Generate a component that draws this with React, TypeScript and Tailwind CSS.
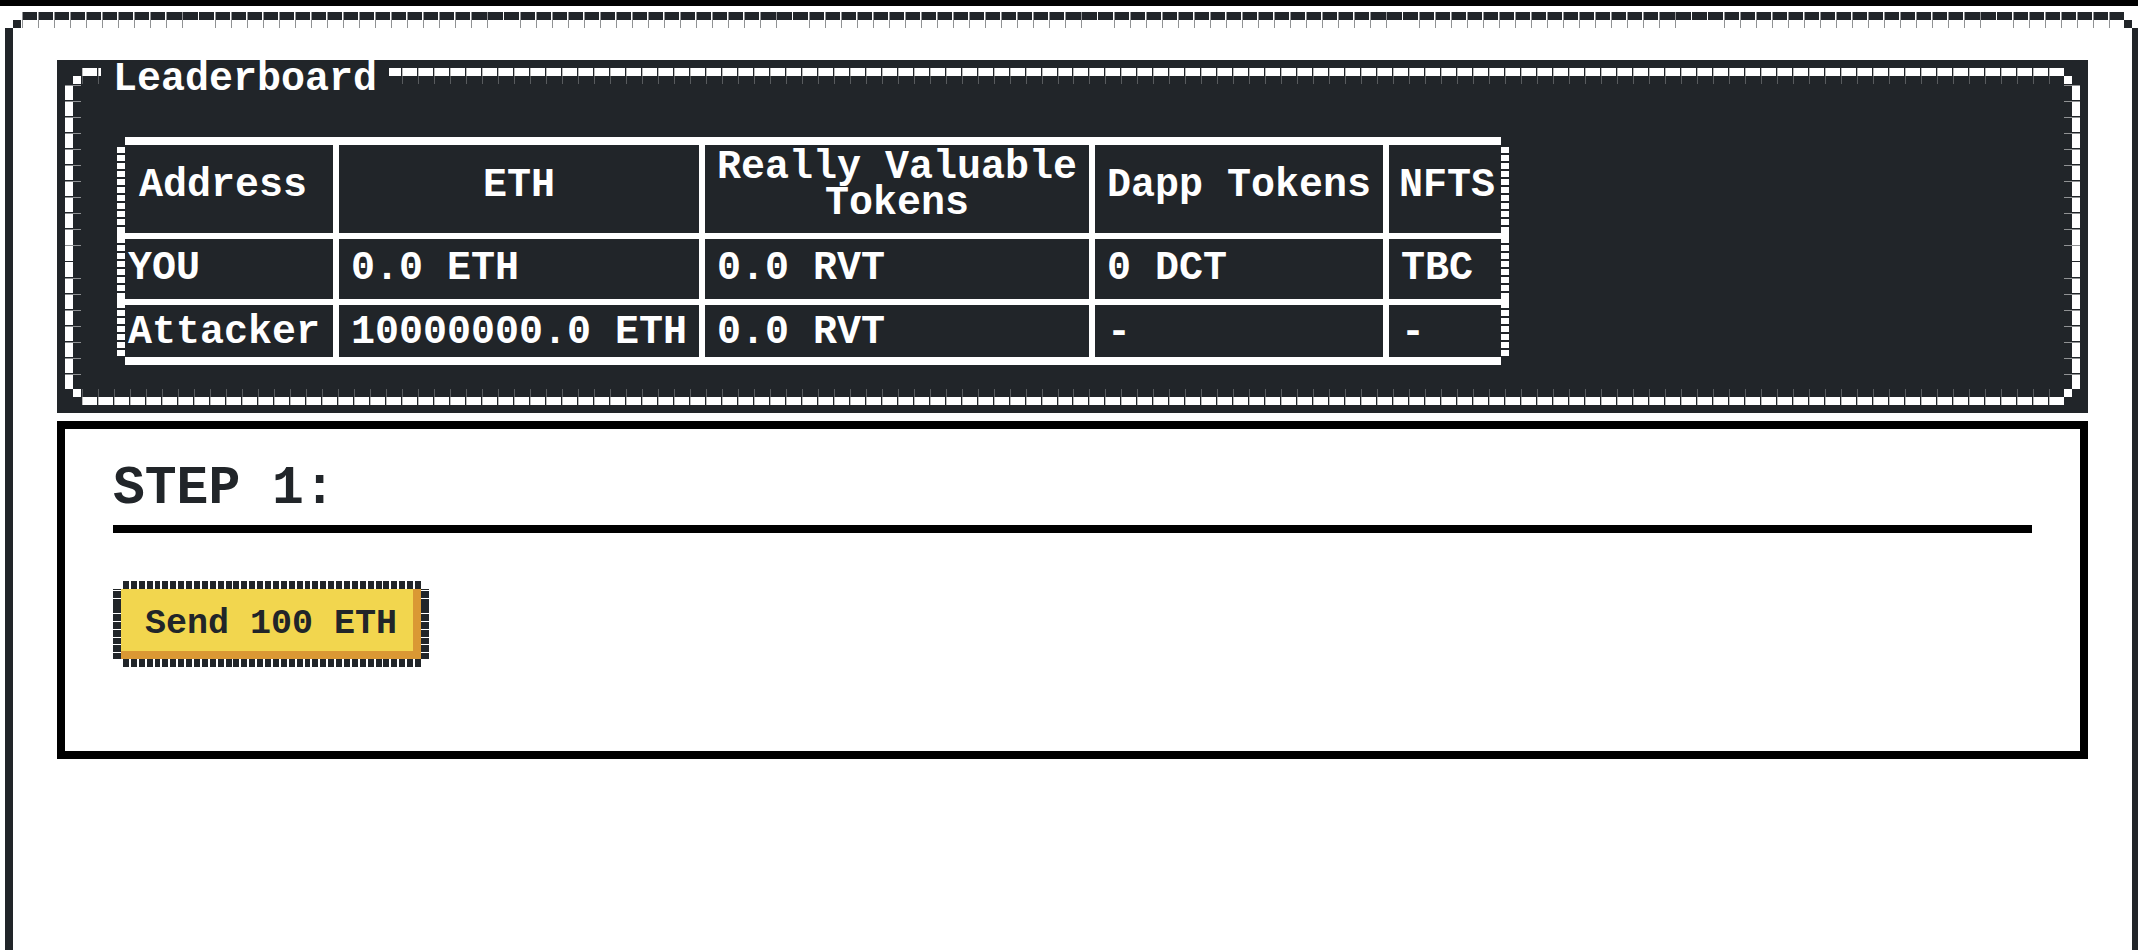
const balances = [
  { address: "YOU", eth: "0.0 ETH", rvt: "0.0 RVT", dapp: "0 DCT", nfts: "TBC" },
  { address: "Attacker", eth: "10000000.0 ETH", rvt: "0.0 RVT", dapp: "-", nfts: "-" },
];

const headCell = "border-r-[6px] border-b-[6px] border-white pt-0.5 pb-2 last:border-r-0";
const cell = "border-r-[6px] border-b-[6px] border-white pl-3 whitespace-nowrap last:border-r-0";
const dashes = "bg-[repeating-linear-gradient(to_bottom,#fff_0_6px,transparent_6px_8px)]";

/** Stitched side of the table; solid where the row lines meet it. */
function TableEdge() {
  return (
    <div aria-hidden="true" className="flex w-2 flex-col pt-[10px] pb-2">
      <div className={`h-[81px] ${dashes}`} />
      <div className="h-[15px] bg-white" />
      <div className={`mt-0.5 h-[49px] ${dashes}`} />
      <div className="h-[14px] bg-white" />
      <div className={`mt-0.5 flex-1 ${dashes}`} />
    </div>
  );
}

function Leaderboard() {
  return (
    <section
      aria-labelledby="leaderboard-title"
      className="border-8 border-solid border-transparent bg-[#212529] bg-clip-border px-9 pb-10 text-white [border-image-repeat:round] [border-image-slice:24] [border-image-source:url('data:image/svg+xml,%3Csvg%20xmlns=%22http://www.w3.org/2000/svg%22%20width=%2264%22%20height=%2264%22%20shape-rendering=%22crispEdges%22%3E%3Cpath%20d=%22M16%2016h8v8h-8zM40%2016h8v8h-8zM16%2040h8v8h-8zM40%2040h8v8h-8zM26%208h14v8h-14zM26%2048h14v8h-14zM8%2026h8v14h-8zM48%2026h8v14h-8z%22%20fill=%22white%22/%3E%3Cpath%20d=%22M25%208h1v8h-1zM25%2048h1v8h-1z%22%20fill=%22%23bbbbbb%22/%3E%3Cpath%20d=%22M8%2025h16v1h-16zM40%2025h16v1h-16z%22%20fill=%22%23909294%22/%3E%3Cpath%20d=%22M25%2016h1v8h-1zM25%2040h1v8h-1z%22%20fill=%22%23585b5e%22/%3E%3C/svg%3E')] [border-image-width:24px]"
    >
      <h2 id="leaderboard-title" className="w-fit bg-[#212529] px-3 pb-1 text-[40px] leading-6 font-bold">
        Leaderboard
      </h2>
      <div className="mt-[41px] ml-4 flex w-fit">
        <TableEdge />
        <table className="table-fixed border-separate border-spacing-0 border-y-8 border-white text-left text-[40px] leading-9 font-bold">
          <colgroup>
            <col className="w-[214px]" />
            <col className="w-[366px]" />
            <col className="w-[390px]" />
            <col className="w-[294px]" />
            <col className="w-[112px]" />
          </colgroup>
          <thead>
            <tr className="h-[94px] text-center">
              <th className={`${headCell} pr-3`}>Address</th>
              <th className={headCell}>ETH</th>
              <th className={headCell}>Really Valuable Tokens</th>
              <th className={headCell}>Dapp Tokens</th>
              <th className={`${headCell} pl-1`}>NFTS</th>
            </tr>
          </thead>
          <tbody className="[&>tr:last-child>td]:border-b-0 [&>tr:last-child>td]:pt-1">
            {balances.map((row) => (
              <tr key={row.address} className="h-[66px] last:h-[52px]">
                <td className="border-r-[6px] border-b-[6px] border-white pl-[3px] whitespace-nowrap">{row.address}</td>
                <td className={cell}>{row.eth}</td>
                <td className={cell}>{row.rvt}</td>
                <td className={cell}>{row.dapp}</td>
                <td className={cell}>{row.nfts}</td>
              </tr>
            ))}
          </tbody>
        </table>
        <TableEdge />
      </div>
    </section>
  );
}

function Step() {
  return (
    <section className="mt-2 border-8 border-black px-12 pt-8 pb-[92px]">
      <h2 className="text-[53px] leading-[56px] font-bold">STEP 1:</h2>
      <hr className="mt-2 border-t-8 border-black" />
      <button
        type="button"
        className="mt-14 ml-2 block cursor-pointer border-0 border-solid bg-[#f2d64e] px-6 py-4 text-[35px] leading-[38px] font-bold shadow-[inset_-8px_-8px_0_#da9834] [border-image-outset:16px] [border-image-repeat:round] [border-image-slice:16] [border-image-source:url('data:image/svg+xml,%3Csvg%20xmlns=%22http://www.w3.org/2000/svg%22%20width=%2240%22%20height=%2240%22%20shape-rendering=%22crispEdges%22%3E%3Cpath%20d=%22M18%208h6v8h-6zM18%2024h6v8h-6zM8%2016h8v1h-8zM8%2018h8v6h-8zM24%2016h8v1h-8zM24%2018h8v6h-8z%22%20fill=%22rgb(33,37,41)%22/%3E%3C/svg%3E')] [border-image-width:16px]"
      >
        Send 100 ETH
      </button>
    </section>
  );
}

export default function App() {
  return (
    <div className="flex h-screen flex-col overflow-hidden bg-white font-['Liberation_Mono',monospace] text-[#212529]">
      <div className="h-1.5 shrink-0 bg-black" />
      <main className="-mt-0.5 -mr-[10px] -mb-6 -ml-[3px] flex-1 border-8 border-solid border-transparent px-[52px] pt-12 [border-image-repeat:round_stretch] [border-image-slice:24] [border-image-source:url('data:image/svg+xml,%3Csvg%20xmlns=%22http://www.w3.org/2000/svg%22%20width=%2264%22%20height=%2264%22%20shape-rendering=%22crispEdges%22%3E%3Cpath%20d=%22M16%2016h8v8h-8zM40%2016h8v8h-8zM16%2040h8v8h-8zM40%2040h8v8h-8zM26%208h14v8h-14zM26%2048h14v8h-14zM8%2024h8v16h-8zM48%2024h8v16h-8z%22%20fill=%22rgb(33,37,41)%22/%3E%3Cpath%20d=%22M25%208h1v16h-1zM25%2040h1v16h-1z%22%20fill=%22%23909294%22/%3E%3C/svg%3E')] [border-image-width:24px]">
        <Leaderboard />
        <Step />
      </main>
    </div>
  );
}
